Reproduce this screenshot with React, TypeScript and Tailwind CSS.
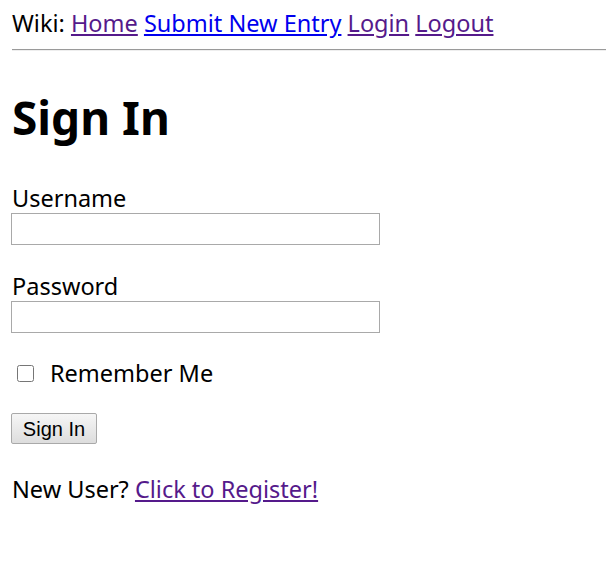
import React from 'react';

const App = () => {
  return (
    <div className="min-h-[574px] bg-white pl-3 text-[23.5px] leading-[30px] text-black [font-family:'Noto_Sans',sans-serif]">
      <div className="pt-[8px]">
        Wiki:{' '}
        <a href="#" className="text-[#551a8b] underline">Home</a>{' '}
        <a href="#" className="text-[#0000ee] underline">Submit New Entry</a>{' '}
        <a href="#" className="text-[#551a8b] underline">Login</a>{' '}
        <a href="#" className="text-[#551a8b] underline">Logout</a>
      </div>
      <hr className="mt-[11px] h-[2px] border-0 border-t border-t-[#9a9a9a] border-b border-b-[#eeeeee]" />
      <h1 className="mt-[40px] text-[46px] font-bold leading-[52px]">Sign In</h1>
      <form className="mt-[40px]">
        <label className="block">Username</label>
        <input type="text" className="block h-[32px] w-[369px] -ml-px border border-[#a9a9a9]" />
        <label className="mt-[26px] block">Password</label>
        <input type="password" className="block h-[32px] w-[369px] -ml-px border border-[#a9a9a9]" />
        <div className="mt-[25px] flex items-center">
          <input type="checkbox" className="ml-[5px] h-[17px] w-[17px]" />
          <span className="ml-[16px]">Remember Me</span>
        </div>
        <button type="button" className="mt-[25px] -ml-px h-[31px] w-[86px] rounded-[2px] border border-[#a9a9a9] bg-gradient-to-b from-[#f6f6f6] to-[#dddddd] text-[20px] leading-none [font-family:'Liberation_Sans',sans-serif]">
          Sign In
        </button>
        <div className="mt-[30px]">
          New User?{' '}
          <a href="#" className="text-[#551a8b] underline">Click to Register!</a>
        </div>
      </form>
    </div>
  );
};

export default App;
